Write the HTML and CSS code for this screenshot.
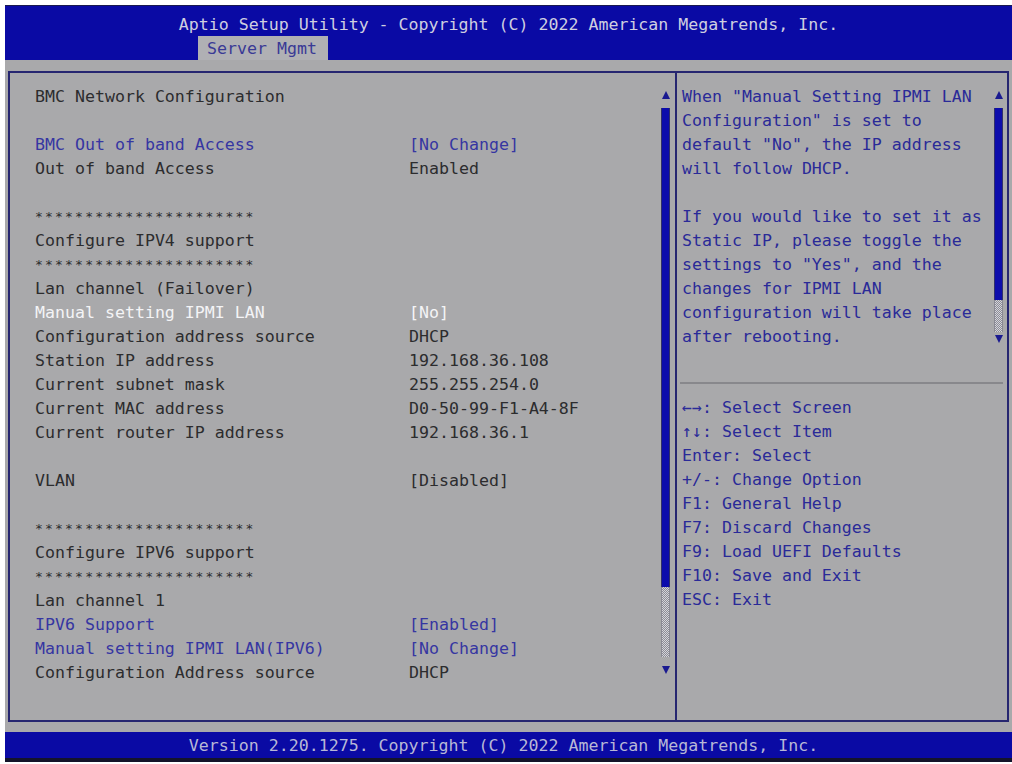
FILE: index.html
```html
<!DOCTYPE html>
<html lang="en">
<head>
  <meta charset="UTF-8">
  <meta name="viewport" content="width=device-width, initial-scale=1.0">
  <title>Aptio Setup Utility - Server Mgmt</title>
  <link rel="stylesheet" href="styles.css">
</head>
<body>
  <div class="screen">
    <!-- Title bar with the active tab -->
    <div class="header">
      <div class="title">Aptio Setup Utility - Copyright (C) 2022 American Megatrends, Inc.</div>
      <div class="tabs">
        <span class="tab">Server Mgmt</span>
      </div>
    </div>

    <div class="main">
      <div class="frame">
        <!-- Settings list -->
        <div class="left">
          <div class="list">
            <div class="row"><span class="label">BMC Network Configuration</span></div>
            <div class="row blank"></div>
            <div class="row link"><span class="label">BMC Out of band Access</span><span class="value">[No Change]</span></div>
            <div class="row"><span class="label">Out of band Access</span><span class="value">Enabled</span></div>
            <div class="row blank"></div>
            <div class="row"><span class="label stars">**********************</span></div>
            <div class="row"><span class="label">Configure IPV4 support</span></div>
            <div class="row"><span class="label stars">**********************</span></div>
            <div class="row"><span class="label">Lan channel (Failover)</span></div>
            <div class="row selected"><span class="label">Manual setting IPMI LAN</span><span class="value">[No]</span></div>
            <div class="row"><span class="label">Configuration address source</span><span class="value">DHCP</span></div>
            <div class="row"><span class="label">Station IP address</span><span class="value">192.168.36.108</span></div>
            <div class="row"><span class="label">Current subnet mask</span><span class="value">255.255.254.0</span></div>
            <div class="row"><span class="label">Current MAC address</span><span class="value">D0-50-99-F1-A4-8F</span></div>
            <div class="row"><span class="label">Current router IP address</span><span class="value">192.168.36.1</span></div>
            <div class="row blank"></div>
            <div class="row"><span class="label">VLAN</span><span class="value">[Disabled]</span></div>
            <div class="row blank"></div>
            <div class="row"><span class="label stars">**********************</span></div>
            <div class="row"><span class="label">Configure IPV6 support</span></div>
            <div class="row"><span class="label stars">**********************</span></div>
            <div class="row"><span class="label">Lan channel 1</span></div>
            <div class="row link"><span class="label">IPV6 Support</span><span class="value">[Enabled]</span></div>
            <div class="row link"><span class="label">Manual setting IPMI LAN(IPV6)</span><span class="value">[No Change]</span></div>
            <div class="row"><span class="label">Configuration Address source</span><span class="value">DHCP</span></div>
          </div>
          <div class="scroll">
            <span class="arrow-up"></span>
            <span class="thumb thumb-left"></span>
            <span class="track track-left"></span>
            <span class="arrow-down"></span>
          </div>
        </div>

        <!-- Help and key legend -->
        <div class="right">
          <div class="help-area">
            <div class="help">
              When "Manual Setting IPMI LAN<br>
              Configuration" is set to<br>
              default "No", the IP address<br>
              will follow DHCP.<br>
              <br>
              If you would like to set it as<br>
              Static IP, please toggle the<br>
              settings to "Yes", and the<br>
              changes for IPMI LAN<br>
              configuration will take place<br>
              after rebooting.
            </div>
            <div class="scroll">
              <span class="arrow-up"></span>
              <span class="thumb thumb-right"></span>
              <span class="track track-right"></span>
              <span class="arrow-down arrow-down-right"></span>
            </div>
          </div>
          <div class="divider"></div>
          <div class="keys">
            <div>&larr;&rarr;: Select Screen</div>
            <div>&uarr;&darr;: Select Item</div>
            <div>Enter: Select</div>
            <div>+/-: Change Option</div>
            <div>F1: General Help</div>
            <div>F7: Discard Changes</div>
            <div>F9: Load UEFI Defaults</div>
            <div>F10: Save and Exit</div>
            <div>ESC: Exit</div>
          </div>
        </div>
      </div>
    </div>

    <div class="footer">Version 2.20.1275. Copyright (C) 2022 American Megatrends, Inc.</div>
  </div>
</body>
</html>
```

FILE: styles.css
```css
/* Page reset */
body {
  margin: 0;
  padding: 0;
  background-color: #fff;
  font-family: "DejaVu Sans Mono", "Liberation Mono", monospace;
  font-size: 16.6px;
}

/* Whole setup screen */
.screen {
  width: 1012px;
  height: 764px;
  overflow: hidden;
}

/* Blue title bar */
.header {
  margin: 5px 0 0 5px;
  height: 55px;
  box-sizing: border-box;
  padding-top: 9px;
  background-color: #0a0aa4;
  border-top: 1px solid #1a1a50;
  color: #cfcfe0;
}

.title {
  height: 20px;
  line-height: 20px;
  text-align: center;
}

.tabs {
  margin-top: 1px;
  padding-left: 193px;
}

.tab {
  display: inline-block;
  width: 130px;
  height: 24px;
  line-height: 26px;
  padding-left: 9px;
  box-sizing: border-box;
  background-color: #b0b0b4;
  color: #3a3a96;
}

/* Grey body with the framed panels */
.main {
  margin-left: 5px;
  height: 672px;
  box-sizing: border-box;
  padding: 11px 3px 10px 3px;
  background-color: #a9a9ab;
}

.frame {
  display: flex;
  height: 651px;
  box-sizing: border-box;
  border: 2px solid #262670;
}

/* Left settings panel */
.left {
  display: flex;
  width: 665px;
}

.list {
  flex: 1;
  padding: 12px 0 0 25px;
}

.row {
  display: flex;
  height: 24px;
  line-height: 24px;
  color: #2c2c2e;
  white-space: pre;
}

.label {
  width: 374px;
}

.stars {
  font-size: 13px;
  letter-spacing: 2.2px;
}

.row.link {
  color: #3636a2;
}

.row.selected {
  color: #f4f4f6;
}

/* Scroll bars */
.scroll {
  display: flex;
  flex-direction: column;
  align-items: center;
  width: 9px;
  padding-top: 18px;
  margin-right: 5px;
}

.arrow-up {
  width: 0;
  height: 0;
  border-left: 4px solid transparent;
  border-right: 4px solid transparent;
  border-bottom: 8px solid #1a1a90;
}

.arrow-down {
  width: 0;
  height: 0;
  margin-top: 9px;
  border-left: 4px solid transparent;
  border-right: 4px solid transparent;
  border-top: 8px solid #1a1a90;
}

.arrow-down-right {
  margin-top: 3px;
}

.thumb {
  width: 9px;
  margin-top: 9px;
  background-color: #0c0cac;
  box-sizing: border-box;
  border-left: 1px solid #30306a;
  border-right: 1px solid #30306a;
}

.thumb-left {
  height: 479px;
}

.thumb-right {
  height: 192px;
}

.track {
  width: 9px;
  box-sizing: border-box;
  border-left: 1px solid #8a8a94;
  border-right: 1px solid #8a8a94;
  background: repeating-conic-gradient(#d4d4da 0 25%, #8c8c96 0 50%) 0 0 / 2px 2px;
}

.track-left {
  height: 70px;
}

.track-right {
  height: 32px;
}

/* Right help panel */
.right {
  flex: 1;
  border-left: 2px solid #262670;
  color: #2a2a98;
}

.help-area {
  display: flex;
  height: 309px;
}

.help {
  flex: 1;
  padding: 12px 0 0 5px;
  line-height: 24px;
  white-space: nowrap;
}

.right .scroll {
  margin-right: 4px;
}

.divider {
  height: 2px;
  margin: 0 4px 0 3px;
  background-color: #88888c;
}

.keys {
  padding: 12px 0 0 5px;
  line-height: 24px;
}

/* Bottom version bar */
.footer {
  margin-left: 5px;
  height: 26px;
  line-height: 27px;
  padding-right: 10px;
  text-align: center;
  background-color: #0a0aa4;
  border-bottom: 4px solid #14142a;
  color: #b8b8d6;
}
```
